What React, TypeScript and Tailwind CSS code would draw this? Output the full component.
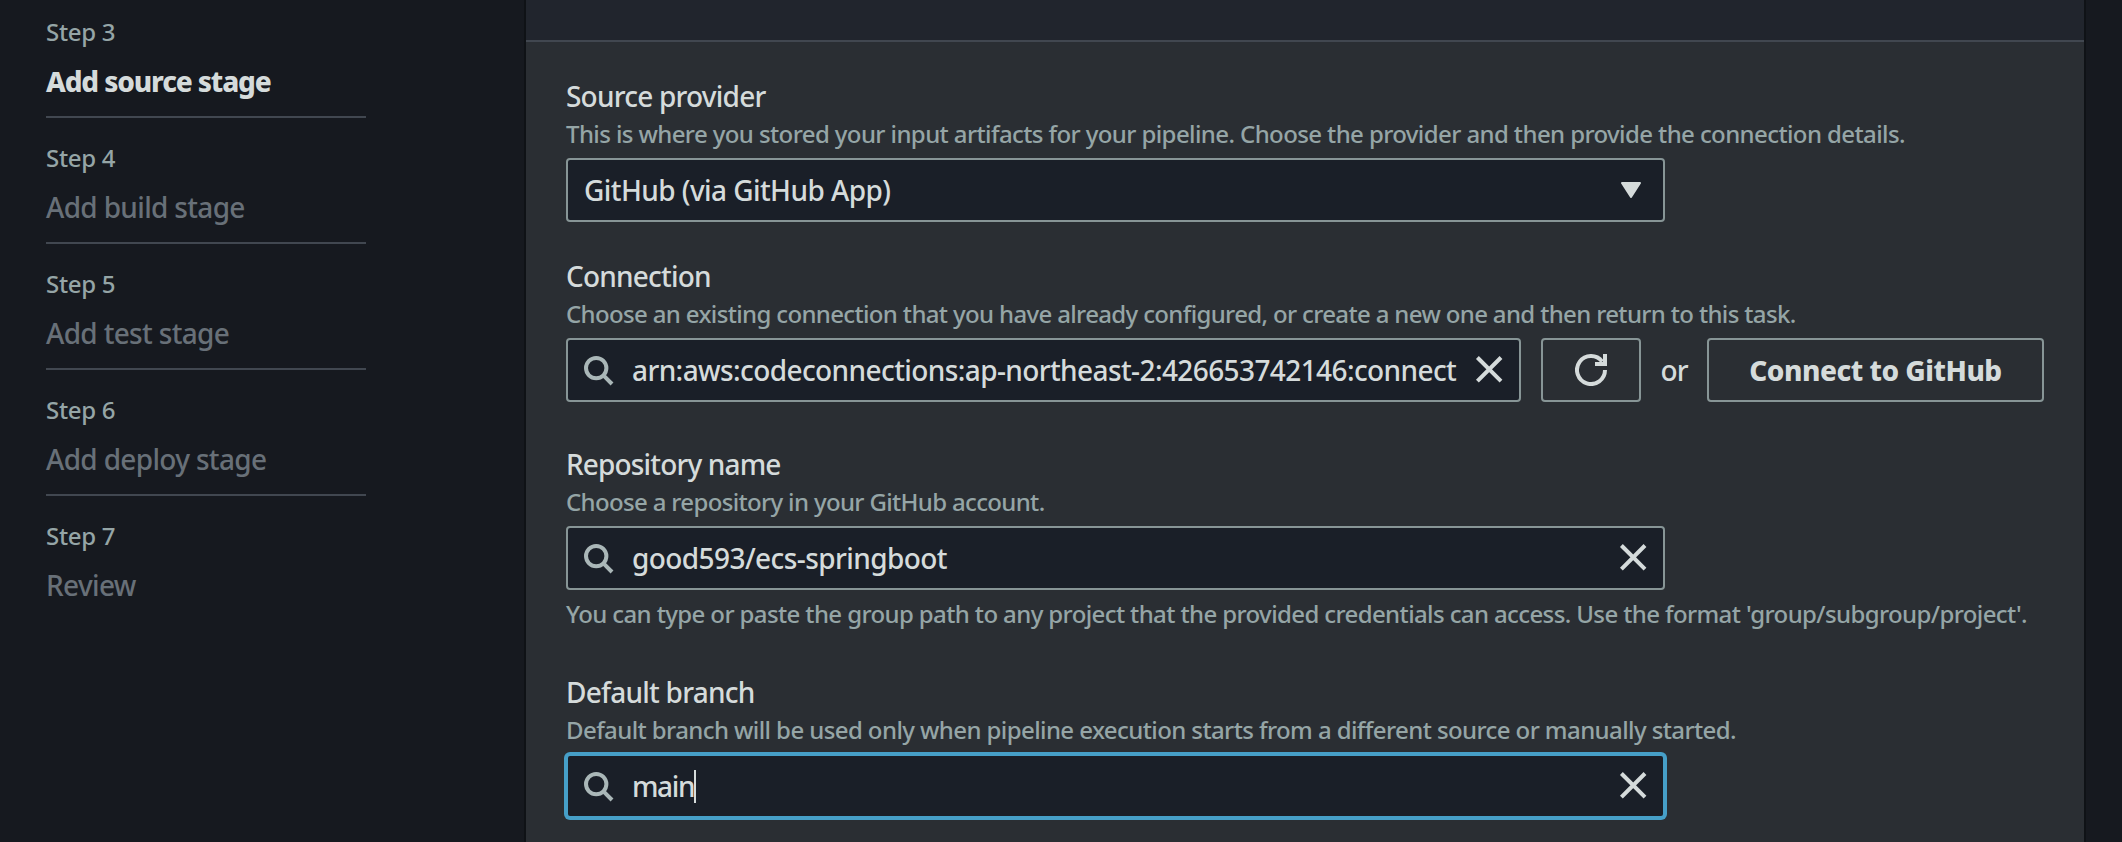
import type { ReactNode } from "react";
import clsx from "clsx";

type Step = { number: number; title: string; tracking: string; active?: boolean };

const STEPS: Step[] = [
  { number: 3, title: "Add source stage", tracking: "tracking-[-1.15px]", active: true },
  { number: 4, title: "Add build stage", tracking: "tracking-[-0.67px]" },
  { number: 5, title: "Add test stage", tracking: "tracking-[-0.67px]" },
  { number: 6, title: "Add deploy stage", tracking: "tracking-[-0.67px]" },
  { number: 7, title: "Review", tracking: "tracking-[-0.65px]" },
];

function SearchIcon() {
  return (
    <svg className="size-8 shrink-0 text-[#aab7b8]" viewBox="0 0 32 32" fill="none" stroke="currentColor" strokeWidth="4">
      <circle cx="14.2" cy="14.1" r="10.2" />
      <path d="M21.2 21.2 30 30" />
    </svg>
  );
}

function CloseIcon() {
  return (
    <svg className="size-8 shrink-0 text-[#d5dbdb]" viewBox="0 0 32 32" fill="none" stroke="currentColor" strokeWidth="4">
      <path d="M4.4 3.5 28 27.1M28 3.5 4.4 27.1" />
    </svg>
  );
}

function RefreshIcon() {
  return (
    <svg className="size-8" viewBox="0 0 32 32" fill="none" stroke="currentColor" strokeWidth="4">
      <path d="M30 16A14 14 0 1 1 27.2 7.6" />
      <path d="M30 0V10H20" />
    </svg>
  );
}

function CaretDown() {
  return (
    <svg className="h-4 w-5 shrink-0 text-[#d5dbdb]" viewBox="0 0 20 16" fill="currentColor" stroke="currentColor" strokeWidth="2" strokeLinejoin="round">
      <path d="M1 1H19L10 15Z" />
    </svg>
  );
}

function Steps() {
  return (
    <nav className="w-[366px] pt-[15px] pl-[46px]">
      {STEPS.map((s, i) => (
        <div key={s.number} className={clsx(i < STEPS.length - 1 && "mb-[23px] border-b-2 border-[#414750] pb-[17px]")}>
          <div className="text-2xl leading-[33px] font-medium tracking-[-0.3px] text-[#95a5a6]">Step {s.number}</div>
          <div
            className={clsx(
              "mt-[15px] text-[28px] leading-9 whitespace-nowrap",
              s.tracking,
              s.active ? "font-extrabold text-[#d5dbdb]" : "font-medium text-[#687078]",
            )}
          >
            {s.title}
          </div>
        </div>
      ))}
    </nav>
  );
}

type FieldProps = {
  label: string;
  labelTracking: string;
  hint: string;
  hintTracking: string;
  children: ReactNode;
};

function Field({ label, labelTracking, hint, hintTracking, children }: FieldProps) {
  return (
    <div>
      <div className={clsx("text-[28px] leading-9 font-medium whitespace-nowrap text-[#d5dbdb]", labelTracking)}>{label}</div>
      <div className={clsx("mt-[3px] mb-2 text-2xl leading-[33px] font-medium whitespace-nowrap text-[#95a5a6]", hintTracking)}>{hint}</div>
      {children}
    </div>
  );
}

type SearchBoxProps = { value: string; tracking: string; width: string; focused?: boolean };

function SearchBox({ value, tracking, width, focused }: SearchBoxProps) {
  return (
    <div
      className={clsx(
        "flex h-16 items-center rounded-sm border-2 bg-[#1a1f28] px-3.5",
        width,
        focused ? "border-[#469fc8] ring-2 ring-[#469fc8]" : "border-[#879596]",
      )}
    >
      <SearchIcon />
      <div className="mr-4 ml-[18px] flex min-w-0 flex-1 items-center overflow-hidden">
        <span className={clsx("text-[28px] leading-10 font-medium whitespace-nowrap text-[#d5dbdb]", tracking)}>{value}</span>
        {focused && <span className="h-[33px] w-0.5 shrink-0 bg-[#d5dbdb]" />}
      </div>
      <CloseIcon />
    </div>
  );
}

export default function App() {
  return (
    <div className="flex h-[842px] w-[2122px] overflow-hidden bg-[#16191f] font-['Noto_Sans',sans-serif]">
      <div className="w-[526px] shrink-0">
        <Steps />
      </div>
      <main className="h-full w-[1558px] shrink-0 bg-[#2a2e33] shadow-[0_0_0_2px_#0f1216]">
        <div className="h-[42px] border-b-2 border-[#414750] bg-[#21252d]" />
        <div className="flex flex-col px-10 pt-9">
          <Field
            label="Source provider"
            labelTracking="tracking-[-0.78px]"
            hint="This is where you stored your input artifacts for your pipeline. Choose the provider and then provide the connection details."
            hintTracking="tracking-[-0.604px]"
          >
            <div className="flex h-16 w-[1099px] items-center justify-between rounded-sm border-2 border-[#879596] bg-[#1a1f28] pr-[22px] pl-4">
              <span className="text-[28px] leading-10 font-medium tracking-[-0.58px] text-[#d5dbdb]">GitHub (via GitHub App)</span>
              <CaretDown />
            </div>
          </Field>
          <div className="h-9" />
          <Field
            label="Connection"
            labelTracking="tracking-[-0.8px]"
            hint="Choose an existing connection that you have already configured, or create a new one and then return to this task."
            hintTracking="tracking-[-0.65px]"
          >
            <div className="flex items-center gap-5">
              <SearchBox
                value="arn:aws:codeconnections:ap-northeast-2:426653742146:connect"
                tracking="tracking-[-0.6px]"
                width="w-[955px]"
              />
              <button className="flex h-16 w-[100px] items-center justify-center rounded-sm border-2 border-[#879596] text-[#d5dbdb]">
                <RefreshIcon />
              </button>
              <span className="flex w-[26px] justify-center text-[28px] leading-10 font-medium tracking-[-0.9px] text-[#d5dbdb]">or</span>
              <button className="flex h-16 w-[337px] items-center justify-center rounded-sm border-2 border-[#879596] text-[28px] leading-10 font-extrabold tracking-[-0.5px] whitespace-nowrap text-[#d5dbdb]">
                Connect to GitHub
              </button>
            </div>
          </Field>
          <div className="h-11" />
          <Field
            label="Repository name"
            labelTracking="tracking-[-0.85px]"
            hint="Choose a repository in your GitHub account."
            hintTracking="tracking-[-0.66px]"
          >
            <SearchBox value="good593/ecs-springboot" tracking="tracking-[-0.58px]" width="w-[1099px]" />
            <div className="mt-[7px] text-2xl leading-[33px] font-medium tracking-[-0.615px] whitespace-nowrap text-[#95a5a6]">
              You can type or paste the group path to any project that the provided credentials can access. Use the format
              'group/subgroup/project'.
            </div>
          </Field>
          <div className="h-11" />
          <Field
            label="Default branch"
            labelTracking="tracking-[-0.76px]"
            hint="Default branch will be used only when pipeline execution starts from a different source or manually started."
            hintTracking="tracking-[-0.595px]"
          >
            <SearchBox value="main" tracking="tracking-[-1.4px]" width="w-[1099px]" focused />
          </Field>
        </div>
      </main>
    </div>
  );
}
